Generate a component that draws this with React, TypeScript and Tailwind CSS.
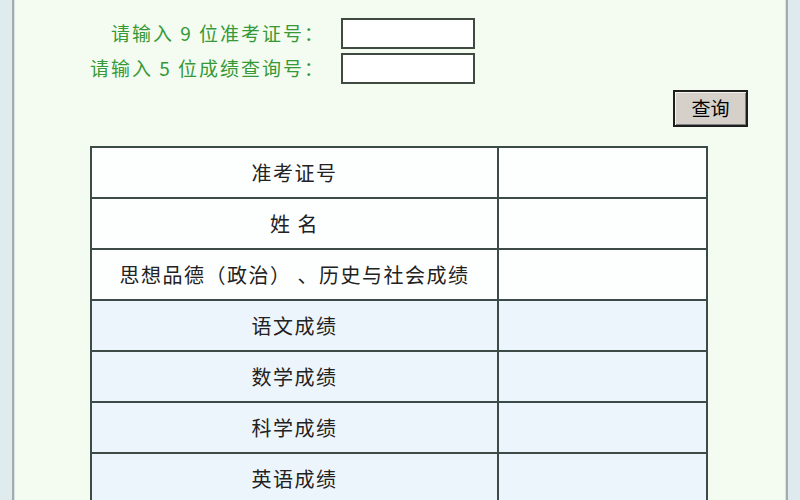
import React from "react";

const rows = [
  { label: "准考证号", tint: false },
  { label: "姓 名", tint: false },
  { label: "思想品德（政治） 、历史与社会成绩", tint: false },
  { label: "语文成绩", tint: true },
  { label: "数学成绩", tint: true },
  { label: "科学成绩", tint: true },
  { label: "英语成绩", tint: true },
];

const cjk = { fontFamily: '"Noto Sans CJK SC", "Noto Sans", sans-serif' };

const App = () => {
  return (
    <div className="flex h-[500px] w-[800px] overflow-hidden bg-[#e0ecee]" style={cjk}>
      <div className="w-[12px] bg-[#e0ebed]" />
      <div className="w-[2px] bg-[#a3abab]" />
      <div className="w-[1px] bg-[#d8e2e2]" />

      <div className="flex flex-1 flex-col bg-[#f4fcf2]">
        {/* 查询条件 */}
        <div className="mt-[18px] grid grid-cols-[310px_134px] gap-x-[16px] gap-y-[4px]">
          <div className="flex h-[31px] items-center justify-end text-[19px] tracking-[2px] text-[#369936]">
            请输入 9 位准考证号：
          </div>
          <input className="h-[31px] border-2 border-[#3f4a40] bg-white outline-none" />
          <div className="flex h-[31px] items-center justify-end text-[19px] tracking-[2px] text-[#369936]">
            请输入 5 位成绩查询号：
          </div>
          <input className="h-[31px] border-2 border-[#3f4a40] bg-white outline-none" />
        </div>

        <div className="mt-[6px] flex justify-end pr-[37px]">
          <button className="flex h-[37px] w-[75px] items-center justify-center border-2 border-[#1e1e1e] bg-[#d5d1ca] text-[19px] text-black shadow-[inset_1px_1px_0_#f4f2ee,inset_-1px_-1px_0_#808080]">
            查询
          </button>
        </div>

        {/* 成绩表 */}
        <table className="mt-[19px] ml-[75px] w-[618px] border-collapse text-[20px] tracking-[1.5px] text-[#222]">
          <tbody>
            {rows.map((r) => (
              <tr key={r.label} className={r.tint ? "bg-[#edf5fc]" : "bg-[#fdfefe]"}>
                <td className="h-[51px] w-[407px] border-2 border-[#3c4b48] p-0 text-center">{r.label}</td>
                <td className="h-[51px] border-2 border-[#3c4b48] p-0" />
              </tr>
            ))}
          </tbody>
        </table>
      </div>

      <div className="w-[1px] bg-[#d8e2e2]" />
      <div className="w-[2px] bg-[#a3abab]" />
      <div className="w-[12px] bg-[#dfeaee]" />
    </div>
  );
};

export default App;
